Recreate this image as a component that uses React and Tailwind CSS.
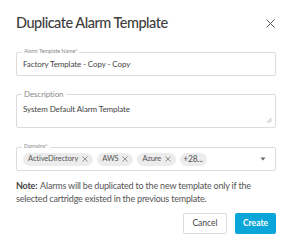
const domains = ['ActiveDirectory', 'AWS', 'Azure'];

function FieldLabel({ children, small }) {
  return (
    <span
      className={`absolute left-[5px] bg-white px-[2px] leading-none text-[#8a8a8a] ${
        small ? '-top-[4px] text-[5.5px]' : '-top-[5px] text-[8px]'
      }`}
    >
      {children}
    </span>
  );
}

function Chip({ label }) {
  return (
    <span className="flex h-[13px] items-center gap-[4px] rounded-full bg-[#ececec] px-[5px] text-[7.5px] tracking-[-0.1px] text-[#555]">
      {label}
      <svg width="6" height="6" viewBox="0 0 6 6" className="text-[#777]">
        <path d="M0.5 0.5L5.5 5.5M5.5 0.5L0.5 5.5" stroke="currentColor" strokeWidth="0.8" />
      </svg>
    </span>
  );
}

export default function App() {
  return (
    <div
      className="h-[248px] w-[292px] bg-white px-4 pt-[12px] text-[#444]"
      style={{ fontFamily: 'Lato, "Open Sans", sans-serif' }}
    >
      <div className="flex h-[22px] items-center justify-between">
        <h1 className="text-[14.5px] font-medium leading-none tracking-[-0.5px] text-[#3d3d3d]">
          Duplicate Alarm Template
        </h1>
        <svg width="9" height="9" viewBox="0 0 9 9" className="mr-[1px] text-[#555]">
          <path d="M0.5 0.5L8.5 8.5M8.5 0.5L0.5 8.5" stroke="currentColor" strokeWidth="1" />
        </svg>
      </div>

      <div className="relative mt-[18px] flex h-[24px] items-center rounded-[2px] border border-[#dcdcdc] px-[6px] text-[8px] tracking-[-0.1px]">
        <FieldLabel small>Alarm Template Name*</FieldLabel>
        Factory Template - Copy - Copy
      </div>

      <div className="relative mt-[18px] h-[34px] rounded-[2px] border border-[#dcdcdc] px-[6px] pt-[8px] text-[8px] tracking-[-0.1px]">
        <FieldLabel>Description</FieldLabel>
        System Default Alarm Template
        <svg width="6" height="6" viewBox="0 0 6 6" className="absolute bottom-[4px] right-[3px] text-[#888]">
          <path d="M5.5 1L1 5.5M5.5 3.5L3.5 5.5" stroke="currentColor" strokeWidth="0.7" />
        </svg>
      </div>

      <div className="relative mt-[19px] flex h-[24px] items-center rounded-[2px] border border-[#dcdcdc] pl-[6px] pr-[9px]">
        <FieldLabel small>Domains*</FieldLabel>
        <div className="flex flex-1 items-center gap-[4px]">
          {domains.map((d) => (
            <Chip key={d} label={d} />
          ))}
          <span className="flex h-[13px] items-center rounded-full bg-[#ececec] pl-[3px] pr-[4px] text-[8.5px] tracking-[-0.2px] text-[#555]">
            +28...
          </span>
        </div>
        <svg width="6" height="4" viewBox="0 0 6 4" className="text-[#666]">
          <path d="M0.5 0.5H5.5L3 3.5Z" fill="currentColor" />
        </svg>
      </div>

      <p className="mt-[8px] text-[9px] leading-[13px] tracking-[-0.2px] text-[#555]">
        <b className="mr-[1px] text-[#444]">Note:</b> Alarms will be duplicated to the new template only if the selected
        cartridge existed in the previous template.
      </p>

      <div className="mt-[8px] flex justify-end gap-[8px]">
        <button className="h-[21px] w-[44px] rounded-[2px] border border-[#dcdcdc] bg-white text-[8.5px] text-[#444]">
          Cancel
        </button>
        <button className="h-[21px] w-[41px] rounded-[2px] bg-[#0aa5d9] text-[8.5px] font-bold text-white">
          Create
        </button>
      </div>
    </div>
  );
}
